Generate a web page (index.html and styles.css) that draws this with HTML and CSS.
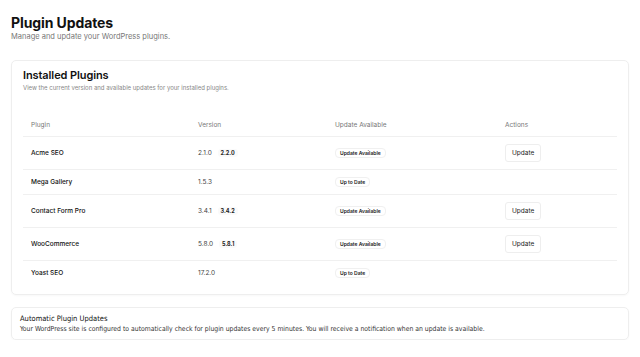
FILE: index.html
```html
<!DOCTYPE html>
<html>
<head>
  <meta charset="UTF-8">
  <title>Plugin Updates</title>
  <link rel="stylesheet" href="styles.css">
</head>
<body>
  <div class="page">
    <h1>Plugin Updates</h1>
    <p class="lead">Manage and update your WordPress plugins.</p>

    <div class="card">
      <h2>Installed Plugins</h2>
      <p class="card-desc">View the current version and available updates for your installed plugins.</p>
      <table class="plugins">
        <thead>
          <tr>
            <th class="c-name">Plugin</th>
            <th class="c-ver">Version</th>
            <th class="c-status">Update Available</th>
            <th class="c-act">Actions</th>
          </tr>
        </thead>
        <tbody>
          <tr>
            <td class="name">Acme SEO</td>
            <td class="ver">2.1.0 <span class="new-ver">2.2.0</span></td>
            <td><span class="badge">Update Available</span></td>
            <td><button class="btn">Update</button></td>
          </tr>
          <tr>
            <td class="name">Mega Gallery</td>
            <td class="ver">1.5.3</td>
            <td><span class="badge">Up to Date</span></td>
            <td></td>
          </tr>
          <tr>
            <td class="name">Contact Form Pro</td>
            <td class="ver">3.4.1 <span class="new-ver">3.4.2</span></td>
            <td><span class="badge">Update Available</span></td>
            <td><button class="btn">Update</button></td>
          </tr>
          <tr>
            <td class="name">WooCommerce</td>
            <td class="ver">5.8.0 <span class="new-ver">5.8.1</span></td>
            <td><span class="badge">Update Available</span></td>
            <td><button class="btn">Update</button></td>
          </tr>
          <tr>
            <td class="name">Yoast SEO</td>
            <td class="ver">17.2.0</td>
            <td><span class="badge">Up to Date</span></td>
            <td></td>
          </tr>
        </tbody>
      </table>
    </div>

    <div class="card note">
      <h3>Automatic Plugin Updates</h3>
      <p>Your WordPress site is configured to automatically check for plugin updates every 5 minutes. You will receive a notification when an update is available.</p>
    </div>
  </div>
</body>
</html>
```

FILE: styles.css
```css
body { margin: 0; background: #fff; font-family: Inter, "Noto Sans", sans-serif; color: #111; }
.page { padding: 15px 11px 0 11px; }
h1 { margin: 0; font-size: 14px; line-height: 16px; font-weight: 700; letter-spacing: -0.1px; }
.lead { margin: 1px 0 0 0; font-size: 7.5px; line-height: 10px; color: #777; }

.card { margin-top: 18px; border: 1px solid #eee; border-radius: 5px; padding: 8px 11px 9px 11px; box-shadow: 0 1px 2px rgba(0,0,0,0.03); }
.card h2 { margin: 0; font-size: 11px; line-height: 13px; font-weight: 600; letter-spacing: -0.1px; }
.card-desc { margin: 2px 0 0 0; font-size: 6px; line-height: 8px; color: #888; }

.plugins { width: 100%; border-collapse: collapse; margin-top: 22px; table-layout: fixed; }
.plugins th { text-align: left; font-weight: 400; font-size: 6.5px; color: #777; height: 22px; padding: 0 8px; border-bottom: 1px solid #f0f0f0; }
.plugins td { font-size: 6.5px; line-height: 10px; height: 10px; padding: 7px 8px; border-bottom: 1px solid #f0f0f0; vertical-align: middle; }
.plugins tr:last-child td { border-bottom: none; }
.c-name { width: 151px; }
.c-ver { width: 121px; }
.c-status { width: 154px; }
.name { font-weight: 500; color: #111; }
.ver { color: #444; }
.new-ver { display: inline-block; vertical-align: middle; margin-left: 4px; padding: 0 3px; line-height: 8px; font-size: 5.5px; font-weight: 700; color: #222; background: #fafafa; border-radius: 3px; }

.badge { display: inline-block; vertical-align: middle; padding: 0 4px; line-height: 8px; font-size: 5px; font-weight: 600; color: #222; border: 1px solid #f0f0f0; border-radius: 4px; background: #fff; }
.btn { vertical-align: middle; font-family: Inter, "Noto Sans", sans-serif; font-size: 6.5px; color: #222; background: #fff; border: 1px solid #eee; border-radius: 3px; height: 18px; padding: 0 6px; }

.note { margin-top: 12px; padding: 5px 8px 5px 8px; }
.note h3 { margin: 0; font-family: "DejaVu Sans", sans-serif; font-stretch: condensed; font-size: 7.5px; line-height: 11px; font-weight: 400; color: #111; }
.note p { margin: 0; font-family: "DejaVu Sans", sans-serif; font-stretch: condensed; font-size: 6.8px; line-height: 10px; color: #333; }
```
